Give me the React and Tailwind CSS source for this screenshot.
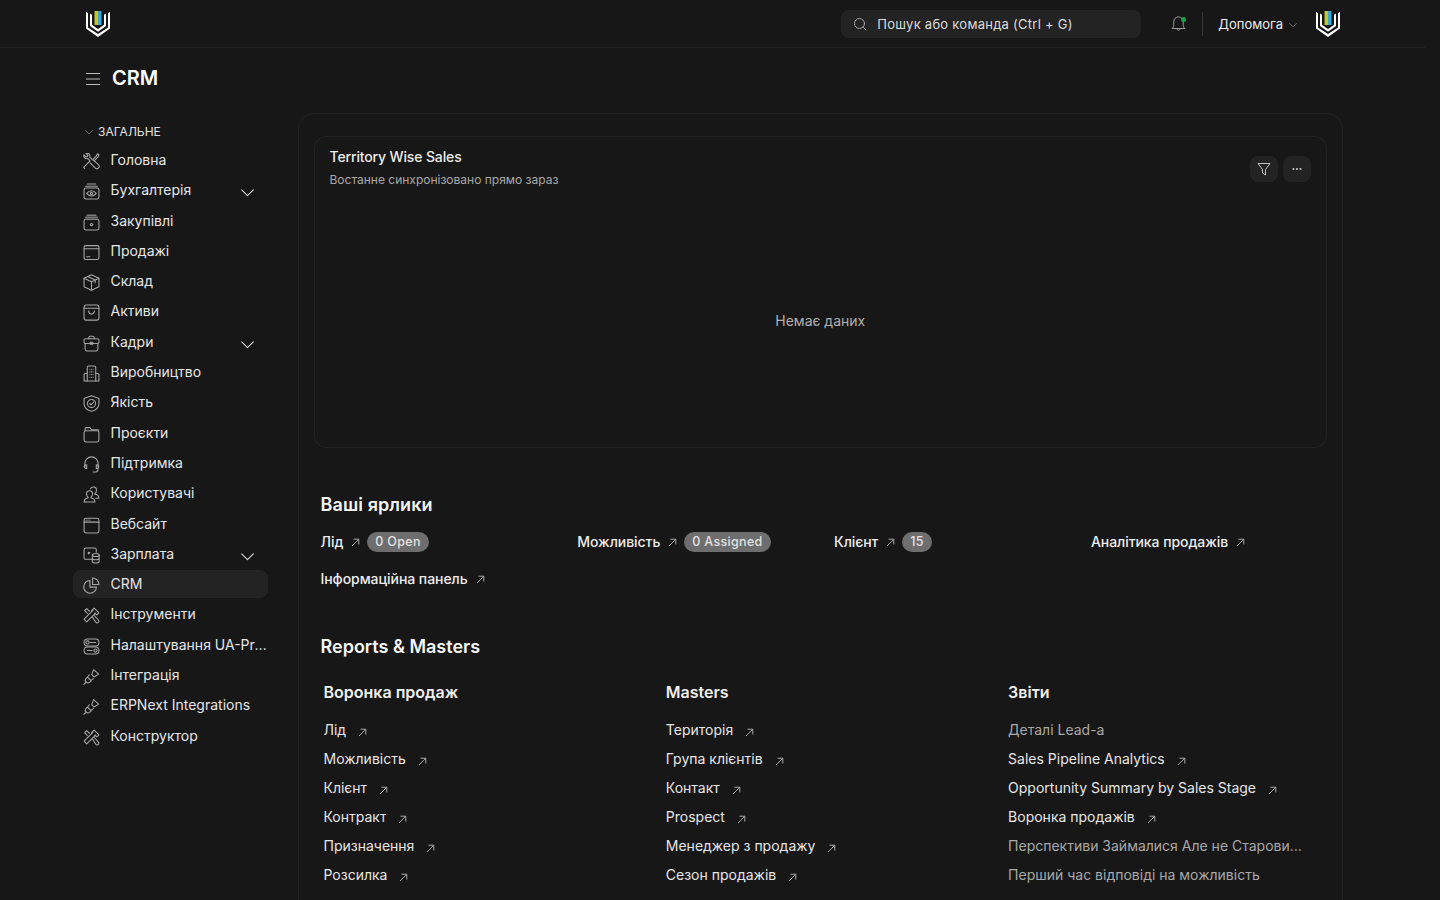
import React from "react";

const S = ({ children, size = 17, className = "", sw = 1 }) => (
  <svg width={size} height={size} viewBox="0 0 16 16" fill="none" stroke="currentColor" strokeWidth={sw} strokeLinecap="round" strokeLinejoin="round" className={`shrink-0 ${className}`}>
    {children}
  </svg>
);

const Tools = () => (
  <S>
    <path d="M1.500 14.500l-.9-1 6-6-2-2.200a3 3 0 0 1-3.800-3.600l2 2 1.400-.4.400-1.400-2-1.800a3 3 0 0 1 3.700 3.900l2.200 2" />
    <path d="M9 6.500l3.600-3.800 1-2 1.500.9-1 2-3.700 3.800" />
    <path d="M6.800 9.300l4.800 5a2 2 0 0 0 2.900 0l.2-.3a2 2 0 0 0 0-2.800l-4.700-4.600" />
  </S>
);
const EyeBox = () => (
  <S>
    <rect x="1" y="4.700" width="14" height="10.300" rx="1.500" />
    <path d="M2.500 3h11M4 1h8" />
    <path d="M3.500 9.800C5 8 6.500 7.300 8 7.300s3 .7 4.500 2.500c-1.500 1.800-3 2.500-4.500 2.500s-3-.7-4.500-2.500z" />
    <circle cx="8" cy="9.800" r="1.100" />
  </S>
);
const StackBox = () => (
  <S>
    <rect x="1" y="5" width="14" height="10" rx="1.500" />
    <path d="M2.500 3.200h11" strokeWidth="1.500" opacity=".7" />
    <path d="M4 1.200h8" strokeWidth="1.500" opacity=".7" />
    <circle cx="8" cy="10" r="1.100" />
  </S>
);
const Card = () => (
  <S>
    <rect x="1" y="1.500" width="14" height="13" rx="1.500" />
    <path d="M1 4.500h14M3.500 12h3" />
  </S>
);
const Cube = () => (
  <S>
    <path d="M8 .8l7 3.200v8L8 15.200 1 12V4z" />
    <path d="M1 4l7 3.300L15 4M8 7.300v7.900M4.500 2.400l7 3.300v2.500" />
  </S>
);
const Bag = () => (
  <S>
    <rect x="1" y="1" width="14" height="14.200" rx="2" />
    <path d="M1 4h14M5 6.500c.5 2 1.700 3 3 3s2.500-1 3-3" />
  </S>
);
const Briefcase = () => (
  <S>
    <path d="M5.500 3.500V2.300c0-.7.500-1.200 1.200-1.200h2.600c.7 0 1.200.5 1.200 1.200v1.200" />
    <rect x="1" y="3.500" width="14" height="4.500" rx="1.200" />
    <path d="M2 8v5.500c0 .8.700 1.500 1.500 1.500h9c.8 0 1.500-.7 1.500-1.500V8" />
    <rect x="6.800" y="6.800" width="2.400" height="1.800" />
  </S>
);
const Building = () => (
  <S>
    <path d="M4 15V2.500C4 1.700 4.700 1 5.500 1h5c.8 0 1.500.7 1.500 1.500V15" />
    <path d="M4 8H2c-.6 0-1 .4-1 1v6h14V9c0-.6-.4-1-1-1h-2" />
    <path d="M6.500 4h0M8 4h0M9.500 4h0M6.500 6.500h0M8 6.500h0M9.500 6.500h0M6.500 9h0M8 9h0M9.500 9h0M6.500 11.500h0M8 11.500h0M9.500 11.500h0" strokeWidth="1.100" />
  </S>
);
const Shield = () => (
  <S>
    <path d="M8 .8l7 2.400v5c0 3.500-3 6-7 7.200-4-1.200-7-3.700-7-7.200v-5z" />
    <circle cx="8" cy="8" r="3.800" />
    <path d="M6.300 8l1.300 1.300 2.400-2.700" />
  </S>
);
const Folder = () => (
  <S>
    <path d="M2 4.500V2.500C2 1.800 2.500 1.500 3 1.500h3.500l1.500 2h6c.6 0 1 .4 1 1" />
    <rect x="1" y="4.500" width="14" height="10.500" rx="1.800" />
  </S>
);
const Headset = () => (
  <S>
    <path d="M1.800 10V7a6.200 6.200 0 0 1 12.400 0v3" />
    <path d="M1.200 10c0-1 .7-1.700 2.300-1.700v3.400c-1.600 0-2.300-.7-2.300-1.700zM14.800 10c0-1-.7-1.700-2.300-1.700v3.400c1.600 0 2.300-.7 2.300-1.700z" />
    <path d="M14 12v1c0 1.300-1 2-2 2H9.500" />
  </S>
);
const Users = () => (
  <S>
    <path d="M1 15c0-2 .6-2.800 2-3.300l2-.7c-1.300-1-1.700-2.200-1.700-3.500C3.300 5.500 4.500 4.500 6.200 4.500S9 5.500 9 7.500c0 1.300-.4 2.500-1.700 3.500l2 .7c1.400.5 2 1.300 2 3.300z" />
    <path d="M7 2.500C7.500 1.500 8.600 1 9.800 1c1.700 0 2.900 1 2.900 3 0 1.300-.4 2.500-1.700 3.500l2 .7c1.400.5 2 1.300 2 3.300h-3" />
  </S>
);
const Browser = () => (
  <S>
    <rect x="1" y="1.200" width="14" height="13.800" rx="1.800" />
    <path d="M1 4.800h14" />
    <path d="M3 3h0M4.700 3h0M6.400 3h0" strokeWidth="1.100" />
  </S>
);
const MonitorDb = () => (
  <S>
    <path d="M8 11.500H2.500C1.600 11.500 1 10.900 1 10V2.500C1 1.600 1.600 1 2.500 1h8.500c.9 0 1.500.6 1.500 1.500V5" />
    <path d="M5 5l1.500.5L5 6.500z" fill="currentColor" />
    <ellipse cx="12" cy="7.500" rx="3.200" ry="1.400" />
    <path d="M8.800 7.500v6.200c0 .8 1.400 1.400 3.200 1.400s3.200-.6 3.200-1.400V7.500M8.800 10.600c0 .8 1.400 1.400 3.200 1.400s3.200-.6 3.200-1.400" />
  </S>
);
const Pie = () => (
  <S>
    <path d="M6.500 3.300a6 6 0 1 0 6.200 6.200H6.500z" />
    <path d="M9 1a6 6 0 0 1 6 6H9z" />
  </S>
);
const Hammer = () => (
  <S>
    <path d="M1 11.500L9.300 3.200M3.500 14l8.300-8.300M1 11.500L3.500 14" />
    <path d="M8 3.500L10.500 1 15 5.500 13 7.500 11 5.700" />
    <path d="M6 4L3.500 1.500 1.500 3.500 4 6" />
    <path d="M9 9.500l3 4.800c.7.800 1.700.8 2.400.2.700-.7.700-1.700 0-2.400L10.500 8" />
  </S>
);
const Toggles = () => (
  <S>
    <rect x="1" y="1" width="14" height="6.500" rx="3.200" />
    <rect x="1" y="8.500" width="14" height="6.500" rx="3.200" />
    <circle cx="4.300" cy="4.200" r="1.500" />
    <circle cx="11.700" cy="11.800" r="1.500" />
    <path d="M7 4.200h5M4 11.800h4.500" />
  </S>
);
const Plug = () => (
  <S>
    <path d="M.8 15.500l2.200-2.200" />
    <path d="M3 13.300c-1.200-1.200-1.200-2.200-.4-3.200L4.200 8.500l3.500 3.500-1.600 1.600c-1 .8-2 .8-3.100-.3z" />
    <path d="M4.700 7.800L6 6.500M8.300 11.200l1.300-1.300" />
    <path d="M8.200 6.200l1.800-4.700 4.800 4.300-4.400 2.600z" />
  </S>
);

const Chevron = ({ size = 16, className = "" }) => (
  <svg width={size} height={size} viewBox="0 0 16 16" fill="none" stroke="currentColor" strokeWidth="1" strokeLinecap="round" strokeLinejoin="round" className={`shrink-0 ${className}`}>
    <path d="M2.500 5.500L8 11l5.500-5.500" />
  </svg>
);

const Arrow = () => (
  <svg width="9" height="9" viewBox="0 0 9 9" fill="none" stroke="currentColor" strokeWidth="1" className="shrink-0 text-[#a8a8a8]">
    <path d="M1 8L7.800 1.200M2.500 1.200h5.300v5.300" />
  </svg>
);

const Logo = () => (
  <svg width="24" height="28" viewBox="0 0 24 28" className="shrink-0">
    <rect x="8.500" y="1" width="3.500" height="14" fill="#c5c62e" />
    <rect x="12" y="1" width="3.500" height="14" fill="#3aa6d8" />
    <path d="M8 15l4 2.500 4-2.500v2l-4 2.500-4-2.500z" fill="#111" />
    <path d="M0 2l2 1v14.500l10 6.500 10-6.500V3l2-1v16.500L12 27 0 18.500z" fill="#fff" />
    <path d="M4 3.500l2 1.200v10l6 4.300 6-4.300v-10l2-1.200v12.500l-8 5.700-8-5.700z" fill="#fff" />
  </svg>
);

const nav = [
  ["Головна", Tools],
  ["Бухгалтерія", EyeBox, true],
  ["Закупівлі", StackBox],
  ["Продажі", Card],
  ["Склад", Cube],
  ["Активи", Bag],
  ["Кадри", Briefcase, true],
  ["Виробництво", Building],
  ["Якість", Shield],
  ["Проєкти", Folder],
  ["Підтримка", Headset],
  ["Користувачі", Users],
  ["Вебсайт", Browser],
  ["Зарплата", MonitorDb, true],
  ["CRM", Pie, false, true],
  ["Інструменти", Hammer],
  ["Налаштування UA-Prozorro", Toggles],
  ["Інтеграція", Plug],
  ["ERPNext Integrations", Plug],
  ["Конструктор", Hammer],
];

const shortcuts = [
  ["Лід", "0 Open"],
  ["Можливість", "0 Assigned"],
  ["Клієнт", "15"],
  ["Аналітика продажів"],
  ["Інформаційна панель"],
];

const columns = [
  ["Воронка продаж", [["Лід", 1], ["Можливість", 1], ["Клієнт", 1], ["Контракт", 1], ["Призначення", 1], ["Розсилка", 1]]],
  ["Masters", [["Територія", 1], ["Група клієнтів", 1], ["Контакт", 1], ["Prospect", 1], ["Менеджер з продажу", 1], ["Сезон продажів", 1]]],
  ["Звіти", [["Деталі Lead-а", 0], ["Sales Pipeline Analytics", 1], ["Opportunity Summary by Sales Stage", 1], ["Воронка продажів", 1], ["Перспективи Займалися Але не Старовинні Ліди", 0], ["Перший час відповіді на можливість", 0]]],
];

export default function App() {
  return (
    <div className="h-screen overflow-hidden bg-[#171717] text-[#ededed] font-['Inter',sans-serif] text-sm">
      <div className="w-[1425px]">
        <header className="h-12 border-b border-[#232323] flex items-center pl-[86px] pr-[85px]">
          <Logo />
          <div className="ml-auto w-[300px] h-7 rounded-lg bg-[#232323] flex items-center pl-3 gap-[10px] text-[13px] text-[#dcdcdc] tracking-[0.02em]">
            <svg width="14" height="14" viewBox="0 0 14 14" fill="none" stroke="#a8a8a8" strokeWidth="1" strokeLinecap="round">
              <circle cx="6.500" cy="6.500" r="5" />
              <path d="M10.200 10.200L13 13" />
            </svg>
            <span className="mt-[2px]">Пошук або команда (Ctrl + G)</span>
          </div>
          <div className="ml-[30px] relative text-[#a8a8a8]">
            <svg width="15" height="17" viewBox="0 0 15 18" fill="none" stroke="currentColor" strokeWidth="1" strokeLinejoin="round" strokeLinecap="round" className="block">
              <path d="M1 14c1-1 1.500-2 1.500-4V7a5 5 0 0 1 5-5c2.500 0 5 2 5 5v3c0 2 .5 3 1.500 4z" />
              <path d="M6 15.500c.3 1 2.700 1 3 0" />
            </svg>
            <span className="absolute right-0 top-[2px] w-[5px] h-[5px] rounded-full bg-[#16a34a]" />
          </div>
          <div className="ml-[16px] w-px h-[24px] bg-[#3a3a3a]" />
          <div className="ml-[15px] flex items-center gap-[5px] text-[13px] text-[#ededed] mt-[2px]">
            <span>Допомога</span>
            <Chevron size={10} className="text-[#a8a8a8]" />
          </div>
          <div className="ml-[18px]">
            <Logo />
          </div>
        </header>

        <div className="h-[60px] pl-[85px] flex items-center gap-[11px]">
          <svg width="16" height="16" viewBox="0 0 16 16" fill="none" stroke="#bdbdbd" strokeWidth="1.200" strokeLinecap="round" className="mt-[1px]">
            <path d="M1.500 2.500h13M1.500 8h13M1.500 13.500h13" />
          </svg>
          <h1 className="text-[20px] font-semibold text-white leading-none">CRM</h1>
        </div>

        <div className="flex pt-[5px] items-start">
          <aside className="ml-[73px] w-[195px] shrink-0 pt-[11px]">
            <div className="h-[16px] flex items-center pl-[11px] gap-[4px] text-[12px] text-[#e2e2e2] mb-[6px]">
              <Chevron size={10} className="text-[#a8a8a8]" />
              <span>ЗАГАЛЬНЕ</span>
            </div>
            <nav className="flex flex-col gap-[2.3px]">
              {nav.map(([label, Icon, hasChild, active]) => (
                <div key={label} className={`h-7 rounded-lg flex items-center pl-[9.500px] ${active ? "bg-[#232323]" : ""}`}>
                  <span className="text-[#a8a8a8] mt-[3px]"><Icon /></span>
                  <span className="ml-[11px] truncate text-[#e6e6e6] text-[14px]">{label}</span>
                  {hasChild && <Chevron size={17} className="ml-auto mr-[12px] mt-[5px] text-[#dcdcdc]" />}
                </div>
              ))}
            </nav>
          </aside>

          <main className="ml-[30px] w-[1045px] shrink-0 h-[900px] border border-[#222222] rounded-t-[16px] pt-[22px] px-[15px]">
            <section className="h-[312px] border border-[#222222] rounded-[12px] pl-[14.500px] pr-[15px] pt-[11px] flex flex-col">
              <div className="flex items-start justify-between">
                <div>
                  <h2 className="text-[14px] font-medium text-[#ededed] leading-[17px] tracking-[-0.01em]">Territory Wise Sales</h2>
                  <p className="mt-[8px] text-[12px] text-[#a8a8a8] leading-[14px]">Востанне синхронізовано прямо зараз</p>
                </div>
                <div className="flex gap-[5px] mt-[8px]">
                  <button className="w-7 h-[26px] rounded-lg bg-[#232323] flex items-center justify-center text-[#c0c0c0]">
                    <svg width="14" height="14" viewBox="0 0 14 14" fill="none" stroke="currentColor" strokeWidth="1" strokeLinejoin="round">
                      <path d="M1 1.500h12L8.500 7.500V13L5.500 11V7.500z" />
                    </svg>
                  </button>
                  <button className="w-7 h-[26px] rounded-lg bg-[#232323] flex items-center justify-center text-[#d0d0d0]">
                    <svg width="12" height="4" viewBox="0 0 12 4" fill="currentColor">
                      <circle cx="2.500" cy="2" r="1" />
                      <circle cx="6" cy="2" r="1" />
                      <circle cx="9.500" cy="2" r="1" />
                    </svg>
                  </button>
                </div>
              </div>
              <div className="flex-1 flex items-center justify-center text-[14px] text-[#b0b0b0] pt-[8px]">Немає даних</div>
            </section>

            <section className="mt-[44px] pl-[6.500px]">
              <h2 className="text-[18px] font-semibold text-[#f5f5f5] leading-[26px] tracking-[0.005em]">Ваші ярлики</h2>
              <div className="mt-[13px] grid grid-cols-[repeat(4,256.800px)] gap-y-[15px]">
                {shortcuts.map(([label, badge]) => (
                  <div key={label} className="h-[22px] flex items-center font-medium text-[14px] text-[#ededed] tracking-[-0.004em]">
                    <span>{label}</span>
                    <span className="ml-[8px] mt-[1px]"><Arrow /></span>
                    {badge && (
                      <span className="ml-[7px] h-5 px-2 rounded-full bg-[#6e6e6e] text-[#e2e2e2] text-[12.500px] flex items-center tracking-[0.025em]">{badge}</span>
                    )}
                  </div>
                ))}
              </div>
            </section>

            <section className="mt-[44px] pl-[6.500px]">
              <h2 className="text-[18px] font-semibold text-[#f5f5f5] leading-[26px]">Reports &amp; Masters</h2>
              <div className="mt-[20px] ml-[3px] grid grid-cols-[repeat(3,342.300px)]">
                {columns.map(([title, links]) => (
                  <div key={title}>
                    <h3 className="text-[16px] font-semibold text-[#f0f0f0] leading-[24px]">{title}</h3>
                    <div className="mt-[15px] flex flex-col gap-[7px]">
                      {links.map(([label, on]) => (
                        <div key={label} className={`h-[22px] flex items-center max-w-[296px] text-[14px] ${on ? "text-[#e6e6e6]" : "text-[#a8a8a8]"}`}>
                          <span className="truncate">{label}</span>
                          {on ? <span className="ml-[12px] mt-[4px]"><Arrow /></span> : null}
                        </div>
                      ))}
                    </div>
                  </div>
                ))}
              </div>
            </section>
          </main>
        </div>
      </div>
    </div>
  );
}
